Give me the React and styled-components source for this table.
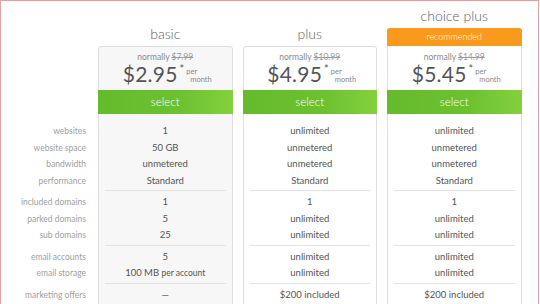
import React from 'react'
import styled, { createGlobalStyle } from 'styled-components'

const GlobalStyle = createGlobalStyle`
    html, body {
        margin: 0;
        padding: 0;
        background: #fff;
        overflow: hidden;
    }
    body {
        font-family: Lato, "Open Sans", sans-serif;
    }
`

const Frame = styled.div`
    width: 537px;
    height: 303px;
    border: 1px solid #dba5a5;
    border-bottom: none;
    display: flex;
    align-items: flex-start;
    overflow: hidden;
`

const LabelColumn = styled.div`
    width: 97px;
    flex-shrink: 0;
    padding-top: 113px;
`

const Plans = styled.div`
    display: flex;
    gap: 10px;
`

const PlanColumn = styled.div`
    width: 134.5px;
    display: flex;
    flex-direction: column;
`

const Header = styled.div`
    height: 45px;
    flex-shrink: 0;
    display: flex;
    flex-direction: column;
    justify-content: flex-end;
`

const PlanName = styled.div`
    font-size: 14px;
    font-weight: 300;
    line-height: 20px;
    color: #5e5e5e;
    text-align: center;
    margin-bottom: 2px;
`

const Badge = styled.div`
    height: 18px;
    line-height: 18px;
    background: #f99a1c;
    color: #fff;
    font-size: 9px;
    font-weight: 300;
    text-align: center;
    border-radius: 3px 3px 0 0;
`

const Card = styled.div`
    border: 1px solid #dedede;
    border-top: ${p => (p.$flat ? 'none' : '1px solid #dedede')};
    border-radius: ${p => (p.$flat ? '0' : '3px 3px 0 0')};
    background: ${p => (p.$muted ? '#f7f7f7' : '#fff')};
    flex-shrink: 0;
`

const PriceBox = styled.div`
    height: ${p => (p.$flat ? '44px' : '43px')};
    box-sizing: border-box;
    padding-top: ${p => (p.$flat ? '6px' : '5px')};
    text-align: center;
`

const Normally = styled.div`
    font-size: 8.5px;
    line-height: 11px;
    color: #8a8a8a;
    s {
        color: #9a9a9a;
    }
`

const PriceRow = styled.div`
    display: flex;
    justify-content: center;
    align-items: flex-start;
    padding-left: 4px;
`

const Amount = styled.span`
    font-size: 21px;
    line-height: 22px;
    color: #555;
    letter-spacing: 0.2px;
`

const Star = styled.span`
    font-size: 11px;
    line-height: 12px;
    color: #555;
    margin: 0 2px 0 2px;
`

const Per = styled.span`
    font-size: 7.5px;
    line-height: 8px;
    color: #888;
    text-align: left;
    padding-top: 5px;
    span {
        display: block;
        padding-left: 4px;
    }
`

const SelectButton = styled.div`
    height: 24px;
    line-height: 24px;
    margin: 0 -1px;
    background: linear-gradient(to right, #64bb2b 0%, #6cc12f 60%, #84d03e 100%);
    color: #fff;
    font-size: 11.5px;
    font-weight: 300;
    text-align: center;
`

const Group = styled.div`
    margin: 0 6px;
    padding: ${p => (p.$first ? '9px' : '3px')} 0 1px;
    border-bottom: 1px solid ${p => (p.$hidden ? 'transparent' : '#e2e2e2')};
`

const Label = styled.div`
    height: 16.5px;
    line-height: 16.5px;
    font-size: 8.5px;
    color: #a0a0a0;
    text-align: right;
    padding-right: 6px;
    white-space: nowrap;
`

const Value = styled.div`
    height: 16.5px;
    line-height: 16.5px;
    font-size: 9.5px;
    color: #555;
    text-align: center;
    white-space: nowrap;
    small {
        font-size: 8.5px;
    }
`

const groups = [
    ['websites', 'website space', 'bandwidth', 'performance'],
    ['included domains', 'parked domains', 'sub domains'],
    ['email accounts', 'email storage'],
    ['marketing offers'],
]

const plans = [
    {
        name: 'basic',
        normally: '$7.99',
        price: '$2.95',
        muted: true,
        values: [
            ['1', '50 GB', 'unmetered', 'Standard'],
            ['1', '5', '25'],
            ['5', <>100 MB <small>per account</small></>],
            ['—'],
        ],
    },
    {
        name: 'plus',
        normally: '$10.99',
        price: '$4.95',
        values: [
            ['unlimited', 'unmetered', 'unmetered', 'Standard'],
            ['1', 'unlimited', 'unlimited'],
            ['unlimited', 'unlimited'],
            ['$200 included'],
        ],
    },
    {
        name: 'choice plus',
        normally: '$14.99',
        price: '$5.45',
        badge: 'recommended',
        values: [
            ['unlimited', 'unmetered', 'unmetered', 'Standard'],
            ['1', 'unlimited', 'unlimited'],
            ['unlimited', 'unlimited'],
            ['$200 included'],
        ],
    },
]

const App = () => {
    return (
        <>
            <GlobalStyle />
            <Frame>
                <LabelColumn>
                    {groups.map((g, i) => (
                        <Group key={i} $first={i === 0} $hidden>
                            {g.map(label => <Label key={label}>{label}</Label>)}
                        </Group>
                    ))}
                </LabelColumn>
                <Plans>
                    {plans.map(plan => (
                        <PlanColumn key={plan.name}>
                            <Header>
                                <PlanName>{plan.name}</PlanName>
                                {plan.badge && <Badge>{plan.badge}</Badge>}
                            </Header>
                            <Card $muted={plan.muted} $flat={!!plan.badge}>
                                <PriceBox $flat={!!plan.badge}>
                                    <Normally>normally <s>{plan.normally}</s></Normally>
                                    <PriceRow>
                                        <Amount>{plan.price}</Amount>
                                        <Star>*</Star>
                                        <Per>per<span>month</span></Per>
                                    </PriceRow>
                                </PriceBox>
                                <SelectButton>select</SelectButton>
                                {plan.values.map((g, i) => (
                                    <Group key={i} $first={i === 0}>
                                        {g.map((v, j) => <Value key={j}>{v}</Value>)}
                                    </Group>
                                ))}
                            </Card>
                        </PlanColumn>
                    ))}
                </Plans>
            </Frame>
        </>
    )
}

export default App
